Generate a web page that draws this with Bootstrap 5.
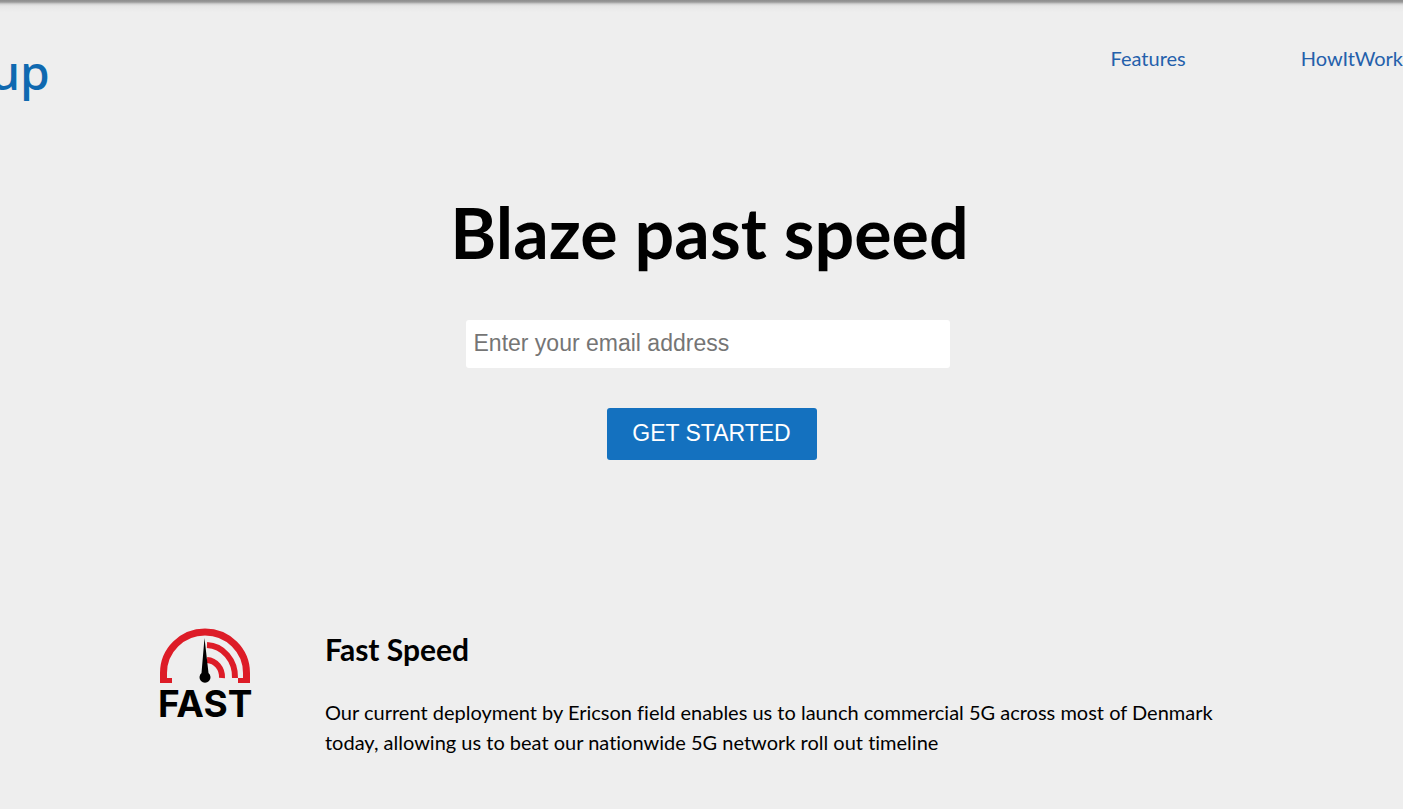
<!DOCTYPE html>
<html lang="en">
<head>
<meta charset="utf-8">
<meta name="viewport" content="width=device-width, initial-scale=1">
<title>Blaze past speed</title>
<link href="https://cdn.jsdelivr.net/npm/bootstrap@5.3.0/dist/css/bootstrap.min.css" rel="stylesheet">
<style>
  body {
    background: #eee;
    color: #000;
    font-family: Lato, "Liberation Sans", sans-serif;
    font-size: 20px;
    line-height: 30px;
    font-variant-ligatures: none;
    overflow-x: hidden;
  }
  .site-header {
    background: linear-gradient(#8c8c8c 0, #999 2px, #d2d2d2 4px, #e6e6e6 6px, #eee 12px);
    padding-top: 40px;
    height: 160px;
  }
  .site-brand {
    color: #0f69b0;
    font-family: "Noto Sans", "Open Sans", sans-serif;
    font-size: 48px;
    font-weight: 500;
    line-height: 64px;
    margin-left: -10px;
  }
  .site-links { gap: 115px; padding-top: 3px; }
  .site-links a { color: #2460ab; text-decoration: none; }
  .hero { padding: 30px 0 0 16px; }
  .hero h1 { font-size: 70px; line-height: 84px; font-weight: 700; margin-bottom: 46px; }
  .signup { gap: 40px; }
  .signup .form-control, .signup .btn {
    font-family: "Liberation Sans", Arial, sans-serif;
    font-size: 23px;
    border: 0;
    border-radius: 3px;
  }
  .signup .form-control { max-width: 484px; height: 48px; padding: 0 8px 2px; }
  .signup .form-control::placeholder { color: #757575; opacity: 1; }
  .signup .btn { background: #1471bf; color: #fff; width: 210px; height: 52px; padding: 0 0 2px; }
  .feature { padding: 168px 160px 40px; gap: 75px; }
  .feature h2 { font-size: 30px; line-height: 36px; font-weight: 700; margin: 3px 0 30px; }
  .feature-icon { width: 90px; height: 95px; overflow: visible; }
</style>
</head>
<body>
<header class="site-header d-flex justify-content-between align-items-start">
  <div class="site-brand">up</div>
  <nav class="site-links d-flex" aria-label="Main">
    <a href="#features">Features</a>
    <a href="#how">HowItWork</a>
  </nav>
</header>
<main>
  <section class="hero text-center">
    <h1>Blaze past speed</h1>
    <form class="signup d-flex flex-column align-items-center">
      <input class="form-control me-1" type="email" aria-label="Email address" placeholder="Enter your email address">
      <button class="btn ms-1" type="button">GET STARTED</button>
    </form>
  </section>
  <section class="feature d-flex align-items-start" id="features">
    <svg class="feature-icon flex-shrink-0" viewBox="0 0 90 95" role="img" aria-label="Fast">
      <g fill="none" stroke="#dd1c27">
        <path d="M0 52.500H12M78 52.500H90" stroke-width="5"/>
        <path d="M3.500 54V45A41.500 41 0 0 1 86.500 45V54" stroke-width="7"/>
        <path d="M47 17A29 32 0 0 1 75 50" stroke-width="6"/>
        <path d="M47 32A16 17 0 0 1 62 50" stroke-width="6"/>
      </g>
      <path d="M44.500 10L41.500 45A5.500 5.500 0 1 0 48.500 45Z"/>
      <text x="-2" y="89" font-family="Inter, sans-serif" font-weight="700" font-size="37">FAST</text>
    </svg>
    <div>
      <h2>Fast Speed</h2>
      <p class="mb-0">Our current deployment by Ericson field enables us to launch commercial 5G across most of Denmark today, allowing us to beat our nationwide 5G network roll out timeline</p>
    </div>
  </section>
</main>
<script src="https://cdn.jsdelivr.net/npm/bootstrap@5.3.0/dist/js/bootstrap.bundle.min.js"></script>
</body>
</html>
